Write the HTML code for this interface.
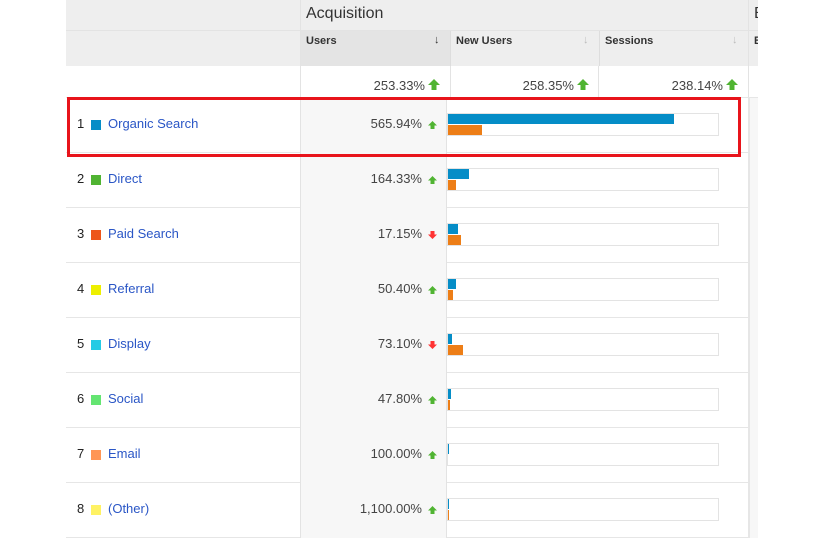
<!DOCTYPE html>
<html><head><meta charset="utf-8"><style>
*{margin:0;padding:0;box-sizing:border-box}
body{width:825px;height:525px;background:#fff;position:relative;overflow:hidden;font-family:"Liberation Sans",Arial,sans-serif;color:#333}
.a{position:absolute}
.row{position:absolute;left:66px;width:692px;height:55px;border-bottom:1px solid #e6e6e6}
.ucol{position:absolute;left:234px;top:0;width:147px;height:55px;background:#f7f7f7;border-left:1px solid #e3e3e3;border-right:1px solid #e3e3e3}
.rcol{position:absolute;left:682px;top:0;width:10px;height:55px;background:#f7f7f7;border-left:2px solid #e6e6e6}
.num{position:absolute;left:11px;top:18px;font-size:13px;color:#222}
.sq{position:absolute;left:25px;top:22px;width:10px;height:10px}
.lbl{position:absolute;left:42px;top:18px;font-size:13px;color:#2a56c6}
.pct{position:absolute;right:336px;top:18px;font-size:13px;color:#444;text-align:right}
.ar{position:absolute;left:361px;top:22px;width:11px;height:10px}
.box{position:absolute;left:381px;top:15px;width:272px;height:23px;border:1px solid #e3e3e3}
.b{position:absolute;left:0;top:0;height:10px;background:#058dc7}
.o{position:absolute;left:0;top:11px;height:10px;background:#ed7e17}
</style></head><body>
<div class="a" style="left:66px;top:0;width:692px;height:66px;background:#eee"></div>
<div class="a" style="left:300px;top:0;width:1px;height:66px;background:#e3e3e3"></div>
<div class="a" style="left:748px;top:0;width:1px;height:66px;background:#e3e3e3"></div>
<div class="a" style="left:66px;top:30px;width:692px;height:1px;background:#e3e3e3"></div>
<div class="a" style="left:301px;top:31px;width:149px;height:35px;background:#e4e4e4"></div>
<div class="a" style="left:450px;top:31px;width:1px;height:35px;background:#ddd"></div>
<div class="a" style="left:599px;top:31px;width:1px;height:35px;background:#ddd"></div>
<div class="a" style="left:306px;top:5px;font-size:16px;color:#333">Acquisition</div>
<div class="a" style="left:754px;top:5px;font-size:16px;color:#333;width:4px;overflow:hidden">B</div>
<div class="a" style="left:306px;top:35px;font-size:11px;font-weight:bold;color:#333">Users</div>
<div class="a" style="left:434px;top:34px;font-size:11px;font-weight:bold;color:#333">↓</div>
<div class="a" style="left:456px;top:35px;font-size:11px;font-weight:bold;color:#333">New Users</div>
<div class="a" style="left:583px;top:34px;font-size:11px;color:#bbb">↓</div>
<div class="a" style="left:605px;top:35px;font-size:11px;font-weight:bold;color:#333">Sessions</div>
<div class="a" style="left:732px;top:34px;font-size:11px;color:#bbb">↓</div>
<div class="a" style="left:754px;top:35px;font-size:11px;font-weight:bold;color:#333;width:4px;overflow:hidden">B</div>
<!-- totals -->
<div class="a" style="left:66px;top:66px;width:692px;height:32px;border-bottom:1px solid #e6e6e6"></div>
<div class="a" style="left:300px;top:66px;width:1px;height:31px;background:#e3e3e3"></div>
<div class="a" style="left:450px;top:66px;width:149px;height:31px;border-left:1px solid #e3e3e3;border-right:1px solid #e3e3e3"></div>
<div class="a" style="left:748px;top:66px;width:1px;height:31px;background:#e3e3e3"></div>
<div class="a" style="right:400px;top:78px;font-size:13px;color:#444">253.33%</div>
<div class="a" style="right:251px;top:78px;font-size:13px;color:#444">258.35%</div>
<div class="a" style="right:102px;top:78px;font-size:13px;color:#444">238.14%</div>
<svg class="a" style="left:428px;top:79px" width="12" height="11"><path d="M6 0L12 6H8.5V11H3.5V6H0Z" fill="#50b432"/></svg>
<svg class="a" style="left:577px;top:79px" width="12" height="11"><path d="M6 0L12 6H8.5V11H3.5V6H0Z" fill="#50b432"/></svg>
<svg class="a" style="left:726px;top:79px" width="12" height="11"><path d="M6 0L12 6H8.5V11H3.5V6H0Z" fill="#50b432"/></svg>

<div class="row" style="top:98px"><div class="ucol"></div><div class="rcol"></div><span class="num">1</span><span class="sq" style="background:#058dc7"></span><span class="lbl">Organic Search</span><span class="pct">565.94%</span><svg class="ar" viewBox="0 0 11 10"><path d="M5.5 1L10 5.5H7.5V9H3.5V5.5H1Z" fill="#50b432"/></svg><div class="box"><div class="b" style="width:226px"></div><div class="o" style="width:34px"></div></div></div>
<div class="row" style="top:153px"><div class="ucol"></div><div class="rcol"></div><span class="num">2</span><span class="sq" style="background:#50b432"></span><span class="lbl">Direct</span><span class="pct">164.33%</span><svg class="ar" viewBox="0 0 11 10"><path d="M5.5 1L10 5.5H7.5V9H3.5V5.5H1Z" fill="#50b432"/></svg><div class="box"><div class="b" style="width:21px"></div><div class="o" style="width:8px"></div></div></div>
<div class="row" style="top:208px"><div class="ucol"></div><div class="rcol"></div><span class="num">3</span><span class="sq" style="background:#ed561b"></span><span class="lbl">Paid Search</span><span class="pct">17.15%</span><svg class="ar" viewBox="0 0 11 10"><path d="M5.5 9L10 4.5H7.5V1H3.5V4.5H1Z" fill="#f33"/></svg><div class="box"><div class="b" style="width:10px"></div><div class="o" style="width:13px"></div></div></div>
<div class="row" style="top:263px"><div class="ucol"></div><div class="rcol"></div><span class="num">4</span><span class="sq" style="background:#edef00"></span><span class="lbl">Referral</span><span class="pct">50.40%</span><svg class="ar" viewBox="0 0 11 10"><path d="M5.5 1L10 5.5H7.5V9H3.5V5.5H1Z" fill="#50b432"/></svg><div class="box"><div class="b" style="width:8px"></div><div class="o" style="width:5px"></div></div></div>
<div class="row" style="top:318px"><div class="ucol"></div><div class="rcol"></div><span class="num">5</span><span class="sq" style="background:#24cbe5"></span><span class="lbl">Display</span><span class="pct">73.10%</span><svg class="ar" viewBox="0 0 11 10"><path d="M5.5 9L10 4.5H7.5V1H3.5V4.5H1Z" fill="#f33"/></svg><div class="box"><div class="b" style="width:4px"></div><div class="o" style="width:15px"></div></div></div>
<div class="row" style="top:373px"><div class="ucol"></div><div class="rcol"></div><span class="num">6</span><span class="sq" style="background:#64e572"></span><span class="lbl">Social</span><span class="pct">47.80%</span><svg class="ar" viewBox="0 0 11 10"><path d="M5.5 1L10 5.5H7.5V9H3.5V5.5H1Z" fill="#50b432"/></svg><div class="box"><div class="b" style="width:3px"></div><div class="o" style="width:2px"></div></div></div>
<div class="row" style="top:428px"><div class="ucol"></div><div class="rcol"></div><span class="num">7</span><span class="sq" style="background:#ff9655"></span><span class="lbl">Email</span><span class="pct">100.00%</span><svg class="ar" viewBox="0 0 11 10"><path d="M5.5 1L10 5.5H7.5V9H3.5V5.5H1Z" fill="#50b432"/></svg><div class="box"><div class="b" style="width:1px"></div></div></div>
<div class="row" style="top:483px"><div class="ucol"></div><div class="rcol"></div><span class="num">8</span><span class="sq" style="background:#fff263"></span><span class="lbl">(Other)</span><span class="pct">1,100.00%</span><svg class="ar" viewBox="0 0 11 10"><path d="M5.5 1L10 5.5H7.5V9H3.5V5.5H1Z" fill="#50b432"/></svg><div class="box"><div class="b" style="width:1px"></div><div class="o" style="width:1px"></div></div></div>

<div class="a" style="left:67px;top:97px;width:674px;height:60px;border:3px solid #e8141b"></div>
</body></html>
